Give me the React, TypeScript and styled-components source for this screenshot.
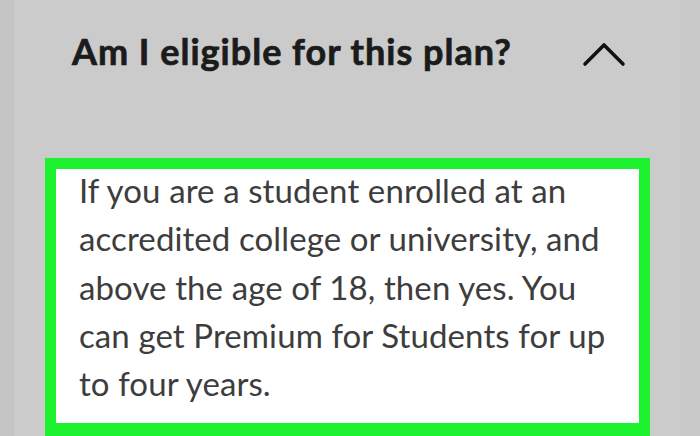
import React from 'react';
import styled, { createGlobalStyle } from 'styled-components';

const GlobalStyle = createGlobalStyle`
  html, body {
    margin: 0;
    padding: 0;
    width: 700px;
    height: 436px;
    overflow: hidden;
    background: #cbcbcb;
  }
`;

const Page = styled.div`
  display: flex;
  width: 700px;
  height: 436px;
  background: #cbcbcb;
`;

const Strip = styled.div<{ w: number; shade: string }>`
  width: ${({ w }) => w}px;
  flex-shrink: 0;
  background: ${({ shade }) => shade};
`;

const Panel = styled.div`
  flex: 1;
  display: flex;
  flex-direction: column;
  padding: 0 31px;
  overflow: hidden;
`;

const Header = styled.div`
  height: 158px;
  display: flex;
  align-items: flex-start;
  justify-content: space-between;
  padding: 29px 24px 0 27px;
  box-sizing: border-box;
`;

const Title = styled.h2`
  margin: 0;
  font-family: Lato, 'Noto Sans', sans-serif;
  font-weight: 700;
  font-size: 36px;
  letter-spacing: 1px;
  line-height: 44px;
  color: #1b1b1b;
  -webkit-text-stroke: 0.7px #1b1b1b;
`;

const Chevron = styled.svg`
  width: 44px;
  height: 26px;
  margin-top: 12px;
`;

const Answer = styled.div`
  flex: 1;
  background: #ffffff;
  border: 11px solid #1cf22e;
  border-bottom-width: 13px;
  padding: 0 0 0 23px;
  overflow: hidden;
`;

const AnswerText = styled.p`
  margin: -3px 0 0;
  font-family: Lato, 'Noto Sans', sans-serif;
  font-weight: 400;
  font-size: 33px;
  letter-spacing: 0.1px;
  line-height: 48.3px;
  color: #3d3d3d;
  white-space: nowrap;
`;

const lines = [
  'If you are a student enrolled at an',
  'accredited college or university, and',
  'above the age of 18, then yes. You',
  'can get Premium for Students for up',
  'to four years.',
];

export default function App() {
  return (
    <Page>
      <GlobalStyle />
      <Strip w={14} shade="#c5c5c5" />
      <Panel>
        <Header>
          <Title>Am I eligible for this plan?</Title>
          <Chevron viewBox="0 0 44 26" fill="none">
            <polyline
              points="3,23 22,4 41,23"
              stroke="#111"
              strokeWidth="3.6"
              strokeLinecap="round"
              strokeLinejoin="round"
            />
          </Chevron>
        </Header>
        <Answer>
          <AnswerText>
            {lines.map((l, i) => (
              <React.Fragment key={i}>
                {l}
                {i < lines.length - 1 && <br />}
              </React.Fragment>
            ))}
          </AnswerText>
        </Answer>
      </Panel>
      <Strip w={19} shade="#c9c9c9" />
    </Page>
  );
}
